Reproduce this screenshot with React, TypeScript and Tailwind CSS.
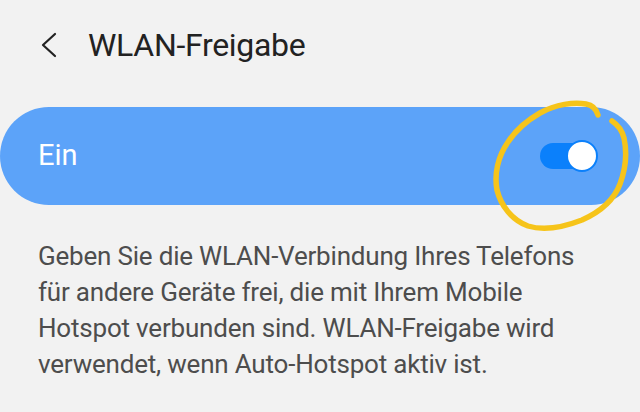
import React from 'react';

function Toggle() {
  return (
    <div className="relative h-[32px] w-[58px]">
      <div className="absolute left-0 top-[3px] h-[26px] w-[52px] rounded-full bg-[#0b80fb]" />
      <div className="absolute right-0 top-0 h-[32px] w-[32px] rounded-full border-2 border-[#0b80fb] bg-white" />
    </div>
  );
}

export default function App() {
  return (
    <div
      className="relative h-[412px] w-[640px] overflow-hidden bg-[#f2f2f2]"
      style={{ fontFamily: 'Roboto, "Noto Sans", sans-serif' }}
    >
      <header className="flex h-[90px] items-center pl-[38px]">
        <svg width="20" height="28" viewBox="0 0 20 28" className="text-[#222]" fill="none" stroke="currentColor" strokeWidth="2.2" strokeLinecap="round" strokeLinejoin="round">
          <path d="M17 3 5 14l12 11" />
        </svg>
        <h1 className="ml-[30px] text-[32px] font-normal tracking-[-0.3px] text-[#222]">WLAN-Freigabe</h1>
      </header>

      <div className="mt-[17px] flex h-[98px] items-center justify-between rounded-full bg-[#5ca3f9] pl-[38px] pr-[42px]">
        <span className="text-[29px] text-white">Ein</span>
        <Toggle />
      </div>

      <p className="mt-[33px] whitespace-nowrap pl-[38px] text-[26px] leading-[36px] tracking-[-0.2px] text-[#4d4d4d]">
        Geben Sie die WLAN-Verbindung Ihres Telefons
        <br />
        für andere Geräte frei, die mit Ihrem Mobile
        <br />
        Hotspot verbunden sind. WLAN-Freigabe wird
        <br />
        verwendet, wenn Auto-Hotspot aktiv ist.
      </p>

      {/* hand-drawn highlight */}
      <svg className="pointer-events-none absolute left-[486px] top-[94px]" width="150" height="146" viewBox="0 0 150 146" fill="none">
        <path
          d="M112 21 C110 14 106 11 100 10 C88 8 70 10 54 19 C40 27 30 36 22 48 C12 62 8 80 11 96 C15 112 26 126 42 132 C58 137 78 133 96 126 C114 118 128 106 134 90 C140 74 141 58 138 44 C136 36 132 31 126 27"
          stroke="#f6c41a"
          strokeWidth="5.5"
          strokeLinecap="round"
        />
      </svg>
    </div>
  );
}
